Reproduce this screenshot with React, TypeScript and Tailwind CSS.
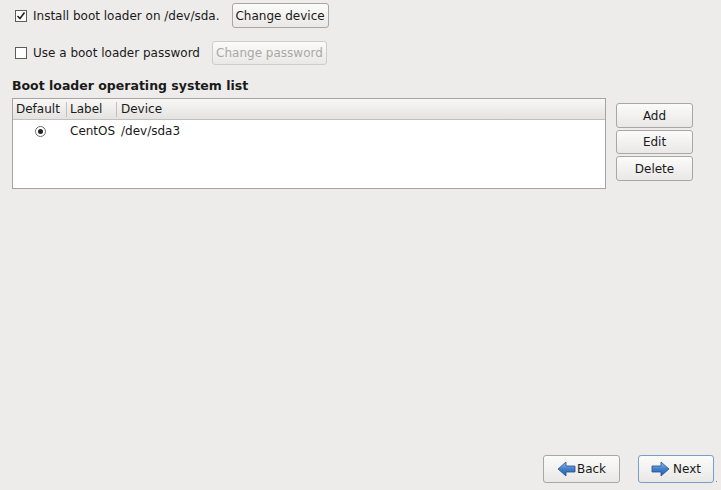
import React from 'react';

const font = { fontFamily: '"DejaVu Sans", "Liberation Sans", sans-serif' };

function CheckBox({ checked }: { checked?: boolean }) {
  return (
    <span className="flex h-[12px] w-[12px] shrink-0 items-center justify-center border border-[#5c5c5c] bg-white">
      {checked && (
        <svg width="10" height="10" viewBox="0 0 10 10">
          <path d="M1.5 5 L4 7.5 L8.5 1.5" fill="none" stroke="#222" strokeWidth="1.6" />
        </svg>
      )}
    </span>
  );
}

function GtkButton({
  children,
  className = '',
  disabled,
}: {
  children: React.ReactNode;
  className?: string;
  disabled?: boolean;
}) {
  return (
    <div
      className={
        'flex shrink-0 items-center justify-center whitespace-nowrap rounded-[3px] border bg-gradient-to-b from-[#fbfbfa] to-[#e9e8e6] ' +
        (disabled ? 'border-[#cfcdca] text-[#aaa8a5] ' : 'border-[#a9a7a4] text-[#1a1a1a] ') +
        className
      }
    >
      {children}
    </div>
  );
}

function Arrow({ dir }: { dir: 'left' | 'right' }) {
  const d = 'M1 8 L9 1 L9 5 L18 5 L18 11 L9 11 L9 15 Z';
  return (
    <svg width="19" height="16" viewBox="0 0 19 16" style={{ transform: dir === 'right' ? 'scaleX(-1)' : undefined }}>
      <defs>
        <linearGradient id={'g' + dir} x1="0" y1="0" x2="0" y2="1">
          <stop offset="0" stopColor="#9cc0ea" />
          <stop offset="0.5" stopColor="#3f7fcf" />
          <stop offset="1" stopColor="#2a5ea8" />
        </linearGradient>
      </defs>
      <path d={d} fill={'url(#g' + dir + ')'} stroke="#2a4f86" strokeWidth="0.8" strokeLinejoin="round" />
    </svg>
  );
}

export default function App() {
  return (
    <div className="flex h-[490px] w-[721px] flex-col bg-[#edeceb] text-[12px] text-[#1a1a1a]" style={font}>
      <div className="ml-[15px] mt-[3px] flex h-[25px] items-center">
        <CheckBox checked />
        <span className="ml-[6px] whitespace-nowrap">Install boot loader on /dev/sda.</span>
        <GtkButton className="ml-[12px] h-[25px] w-[97px]">Change device</GtkButton>
      </div>
      <div className="ml-[15px] mt-[13px] flex h-[24px] items-center">
        <CheckBox />
        <span className="ml-[6px] whitespace-nowrap">Use a boot loader password</span>
        <GtkButton className="ml-[12px] h-[24px] w-[115px]" disabled>
          Change password
        </GtkButton>
      </div>
      <div className="ml-[12px] mt-[13px] whitespace-nowrap text-[12.5px] font-bold leading-[16px]">
        Boot loader operating system list
      </div>

      <div className="ml-[12px] mt-[4px] flex">
        <div className="flex h-[91px] w-[594px] flex-col border border-[#a6a4a1] bg-white">
          <div className="flex h-[21px] items-center border-b border-[#c2c0bc] bg-gradient-to-b from-[#f7f7f6] to-[#e4e3e1]">
            <div className="flex h-full w-[53px] items-center pl-[3px]">Default</div>
            <div className="h-[15px] w-px bg-[#c2c0bc]" />
            <div className="flex h-full w-[49px] items-center pl-[3px]">Label</div>
            <div className="h-[15px] w-px bg-[#c2c0bc]" />
            <div className="flex h-full items-center pl-[4px]">Device</div>
          </div>
          <div className="flex h-[22px] items-center">
            <div className="flex w-[55px] justify-center">
              <span className="flex h-[11px] w-[11px] items-center justify-center rounded-full border border-[#6a6a6a] bg-white">
                <span className="h-[5px] w-[5px] rounded-full bg-[#222]" />
              </span>
            </div>
            <div className="w-[50px] pl-[2px]">CentOS</div>
            <div className="pl-[3px]">/dev/sda3</div>
          </div>
        </div>

        <div className="ml-[10px] mt-[5px] flex flex-col gap-[2px]">
          <GtkButton className="h-[25px] w-[77px]">Add</GtkButton>
          <GtkButton className="h-[24px] w-[77px]">Edit</GtkButton>
          <GtkButton className="h-[25px] w-[77px]">Delete</GtkButton>
        </div>
      </div>

      <div className="flex-1" />

      <div className="mb-[7px] flex items-center justify-end">
        <GtkButton className="h-[28px] w-[77px] gap-[1px]">
          <Arrow dir="left" />
          <span>Back</span>
        </GtkButton>
        <GtkButton className="ml-[18px] h-[28px] w-[76px] gap-[3px] !border-[#7b9cc6]">
          <Arrow dir="right" />
          <span>Next</span>
        </GtkButton>
        <div className="ml-[2px] mr-[4px] mt-[24px] h-px w-px bg-[#888]" />
      </div>
    </div>
  );
}
